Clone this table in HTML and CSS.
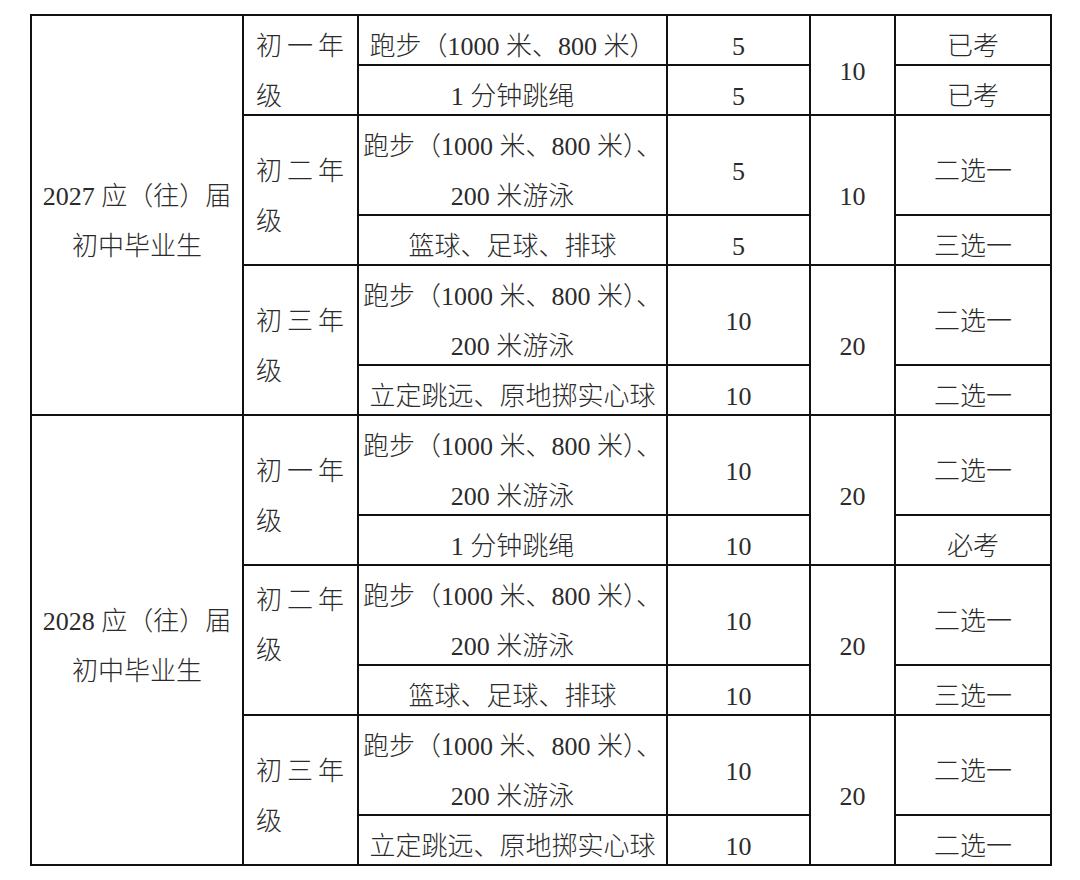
FILE: index.html
```html
<!DOCTYPE html>
<html lang="zh-CN">
<head>
<meta charset="utf-8">
<title>体育考试项目</title>
<link rel="stylesheet" href="styles.css">
</head>
<body>
<div class="sheet">
  <!-- 2027 -->
  <div class="cell cohort span6">2027 应（往）届<br>初中毕业生</div>
  <div class="cell grade span2"><div class="gtext">初一年级</div></div>
  <div class="cell item">跑步（1000 米、800 米）</div>
  <div class="cell pts">5</div>
  <div class="cell sub span2">10</div>
  <div class="cell note">已考</div>

  <div class="cell item">1 分钟跳绳</div>
  <div class="cell pts">5</div>
  <div class="cell note">已考</div>

  <div class="cell grade span2"><div class="gtext">初二年级</div></div>
  <div class="cell item">跑步（1000 米、800 米）、<br>200 米游泳</div>
  <div class="cell pts">5</div>
  <div class="cell sub span2">10</div>
  <div class="cell note">二选一</div>

  <div class="cell item">篮球、足球、排球</div>
  <div class="cell pts">5</div>
  <div class="cell note">三选一</div>

  <div class="cell grade span2"><div class="gtext">初三年级</div></div>
  <div class="cell item">跑步（1000 米、800 米）、<br>200 米游泳</div>
  <div class="cell pts">10</div>
  <div class="cell sub span2">20</div>
  <div class="cell note">二选一</div>

  <div class="cell item">立定跳远、原地掷实心球</div>
  <div class="cell pts">10</div>
  <div class="cell note">二选一</div>

  <!-- 2028 -->
  <div class="cell cohort span6">2028 应（往）届<br>初中毕业生</div>
  <div class="cell grade span2"><div class="gtext">初一年级</div></div>
  <div class="cell item">跑步（1000 米、800 米）、<br>200 米游泳</div>
  <div class="cell pts">10</div>
  <div class="cell sub span2">20</div>
  <div class="cell note">二选一</div>

  <div class="cell item">1 分钟跳绳</div>
  <div class="cell pts">10</div>
  <div class="cell note">必考</div>

  <div class="cell grade grade-top span2"><div class="gtext">初二年级</div></div>
  <div class="cell item">跑步（1000 米、800 米）、<br>200 米游泳</div>
  <div class="cell pts">10</div>
  <div class="cell sub span2">20</div>
  <div class="cell note">二选一</div>

  <div class="cell item">篮球、足球、排球</div>
  <div class="cell pts">10</div>
  <div class="cell note">三选一</div>

  <div class="cell grade span2"><div class="gtext">初三年级</div></div>
  <div class="cell item">跑步（1000 米、800 米）、<br>200 米游泳</div>
  <div class="cell pts">10</div>
  <div class="cell sub span2">20</div>
  <div class="cell note">二选一</div>

  <div class="cell item">立定跳远、原地掷实心球</div>
  <div class="cell pts">10</div>
  <div class="cell note">二选一</div>
</div>
</body>
</html>
```

FILE: styles.css
```css
html, body {
  margin: 0;
  padding: 0;
  background: #ffffff;
}

body {
  font-family: "Liberation Serif", "Noto Sans CJK SC", serif;
  font-size: 26px;
  font-weight: 300;
  color: #2b2b2b;
}

.sheet {
  display: inline-grid;
  margin: 14px 0 0 30px;
  padding: 2px;
  gap: 2px;
  background: #111111;
  grid-template-columns: 210px 113px 307px 141px 83px 154px;
  grid-template-rows: 48px 48px 98px 48px 98px 48px 98px 48px 98px 48px 98px 48px;
}

.cell {
  background: #ffffff;
  display: flex;
  align-items: center;
  justify-content: center;
  text-align: center;
  line-height: 50px;
  padding-top: 14px;
  white-space: nowrap;
  min-width: 0;
  min-height: 0;
}

.span2 { grid-row: span 2; }
.span6 { grid-row: span 6; }

.grade {
  justify-content: flex-start;
  padding-left: 12px;
  padding-right: 13px;
  white-space: normal;
}

.grade-top {
  align-items: flex-start;
  padding-top: 10px;
}

.gtext {
  width: 100%;
  text-align: justify;
  text-justify: inter-character;
  line-height: 50px;
}
```
